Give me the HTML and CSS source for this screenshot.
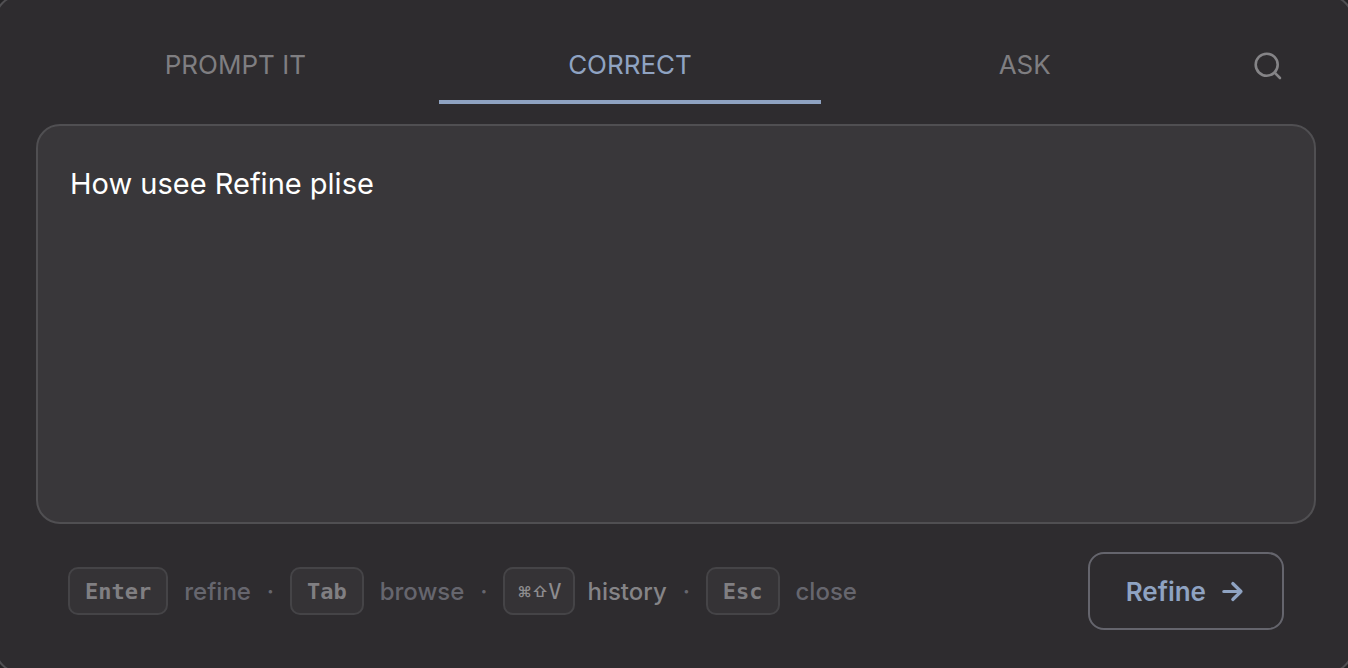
FILE: index.html
```html
<!DOCTYPE html>
<html lang="en">
<head>
<meta charset="utf-8">
<meta name="viewport" content="width=device-width, initial-scale=1">
<title>Refine</title>
<link rel="stylesheet" href="styles.css">
</head>
<body>
<main class="window">
  <nav class="tabs" aria-label="Modes">
    <button class="tab" type="button">PROMPT IT</button>
    <button class="tab tab-active" type="button" aria-current="page">CORRECT</button>
    <button class="tab" type="button">ASK</button>
    <button class="search" type="button" aria-label="Search">
      <svg width="32" height="32" viewBox="0 0 32 32" fill="none" stroke="currentColor" stroke-width="2.6" stroke-linecap="round">
        <circle cx="14.7" cy="14.7" r="11"/>
        <path d="M22.6 22.6l5.4 5.4"/>
      </svg>
    </button>
  </nav>
  <textarea class="editor" aria-label="Text to correct" spellcheck="false">How usee Refine plise</textarea>
  <footer class="footer">
    <div class="hints">
      <kbd class="key">Enter</kbd><span class="action">refine</span><span class="dot">·</span>
      <kbd class="key">Tab</kbd><span class="action">browse</span><span class="dot">·</span>
      <button class="history" type="button"><kbd class="key key-combo"><span class="symbols">⌘⇧</span>V</kbd>history</button><span class="dot">·</span>
      <kbd class="key">Esc</kbd><span class="action">close</span>
    </div>
    <button class="refine" type="button">Refine
      <svg width="24" height="24" viewBox="0 0 24 24" fill="none" stroke="currentColor" stroke-width="3.2" stroke-linecap="round" stroke-linejoin="round">
        <path d="M1.8 12.5h17.2M10.8 4.5l8.2 8-8.2 8"/>
      </svg>
    </button>
  </footer>
</main>
</body>
</html>
```
FILE: styles.css
```css
* {
  box-sizing: border-box;
}

body {
  margin: 0;
  height: 100vh;
  overflow: hidden;
  display: flex;
  background: #242325;
  font-family: Inter, "Liberation Sans", sans-serif;
}

button {
  margin: 0;
  padding: 0;
  border: 0;
  background: none;
  font: inherit;
  color: inherit;
}

.window {
  flex: 1;
  margin: -5px;
  padding: 31px 35px 41px 39px;
  display: flex;
  flex-direction: column;
  border: 2px solid #504f52;
  border-radius: 24px;
  background: #2e2c2f;
}

.tabs {
  display: flex;
  gap: 12px;
  padding: 0 8px;
  color: #7f7e81;
}

.tab {
  flex: 1;
  height: 76px;
  border-bottom: 4px solid transparent;
  font-size: 26px;
}

.tab-active {
  color: #8fa3c2;
  border-bottom-color: #8fa3c2;
}

.search {
  width: 80px;
  display: flex;
  align-items: center;
  justify-content: center;
  color: #858487;
}

.editor {
  flex: 1;
  margin-top: 20px;
  padding: 34px 32px;
  border: 2px solid #504f52;
  border-radius: 24px;
  outline: 0;
  resize: none;
  background: #39373a;
  color: #fff;
  font: 400 29px/48px Inter, "Liberation Sans", sans-serif;
}

.footer {
  display: flex;
  align-items: center;
  justify-content: space-between;
  margin-top: 28px;
  padding: 0 32px;
}

.hints {
  display: flex;
  align-items: center;
  color: #66666e;
  font-size: 24px;
  font-weight: 500;
}

.key {
  height: 48px;
  padding: 0 15px;
  display: flex;
  align-items: center;
  border: 2px solid #454447;
  border-radius: 10px;
  background: #353336;
  color: #807f82;
  font: 700 22px "DejaVu Sans Mono", monospace;
}

.key-combo {
  padding: 0 12px;
  font-weight: 400;
  color: #8d8c8f;
}

.symbols {
  font: 600 15px Inter, "DejaVu Sans", sans-serif;
}

.action {
  margin-left: 16px;
}

.dot {
  width: 39px;
  text-align: center;
}

.history {
  display: flex;
  align-items: center;
  gap: 12px;
  color: #858487;
}

.refine {
  height: 78px;
  padding: 0 36px;
  display: flex;
  align-items: center;
  gap: 16px;
  border: 2px solid #65656d;
  border-radius: 16px;
  color: #8fa3c2;
  font-size: 26px;
  font-weight: 600;
}
```
